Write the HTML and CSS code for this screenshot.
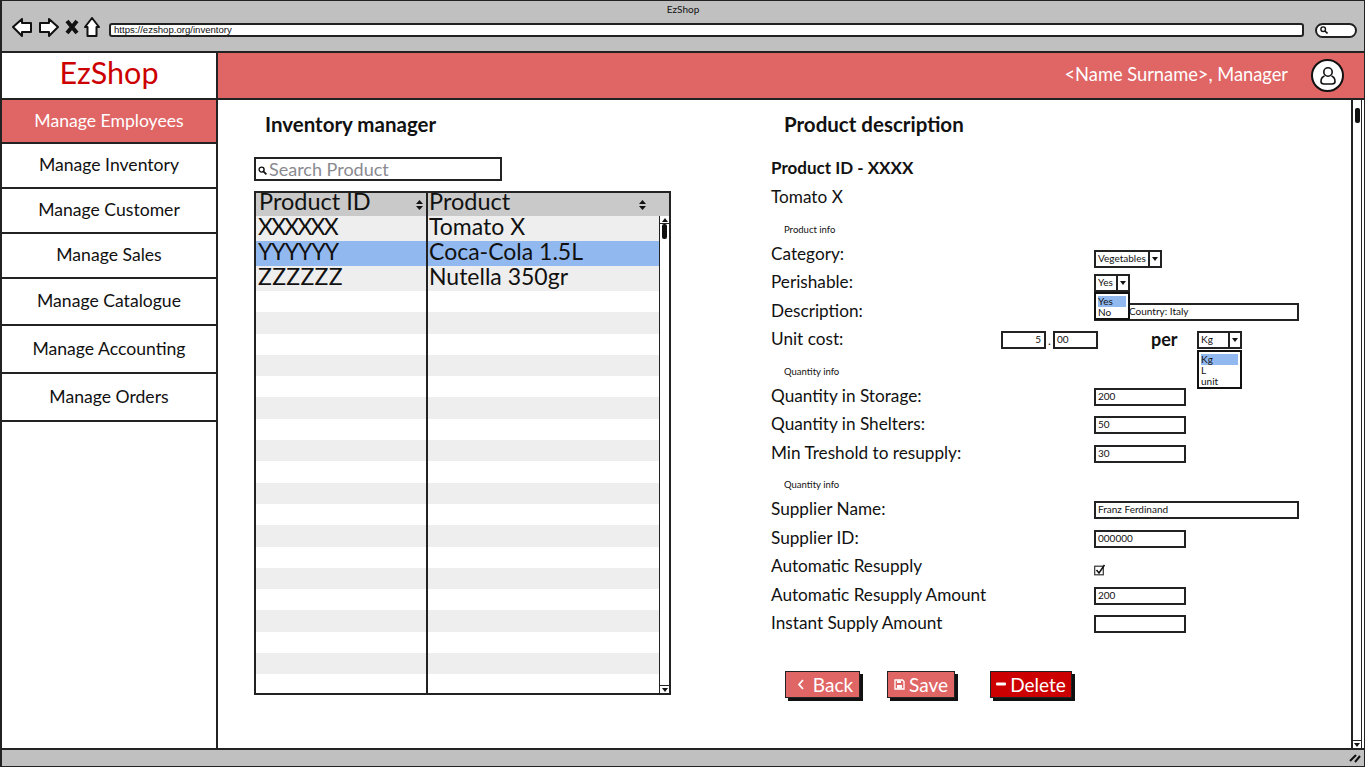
FILE: index.html
```html
<!DOCTYPE html>
<html lang="en">
<head>
<meta charset="utf-8">
<title>EzShop</title>
<link rel="stylesheet" href="styles.css">
</head>
<body>
<div class="frame">
  <header class="chrome">
    <div class="chrome-title">EzShop</div>
    <div class="chrome-nav">
      <svg class="nav-icons" width="92" height="22" viewBox="0 0 92 22">
        <path d="M2 10 L11 2 V6 H20 V15 H11 V19 Z" fill="#fff" stroke="#111" stroke-width="2" stroke-linejoin="round"/>
        <path d="M47 10 L38 2 V6 H29 V15 H38 V19 Z" fill="#fff" stroke="#111" stroke-width="2" stroke-linejoin="round"/>
        <path d="M56 4 L66 16 M66 4 L56 16" fill="none" stroke="#111" stroke-width="4"/>
        <path d="M81 1 L88 10 H85.500 V19 H76.500 V10 H74 Z" fill="#fff" stroke="#111" stroke-width="2" stroke-linejoin="round"/>
      </svg>
      <div class="url">https://ezshop.org/inventory</div>
      <div class="chrome-search">
        <svg width="8" height="8" viewBox="0 0 8 8"><circle cx="3.2" cy="3.2" r="2.3" fill="none" stroke="#111" stroke-width="1.4"/><path d="M5 5 L7.5 7.5" stroke="#111" stroke-width="1.6"/></svg>
      </div>
    </div>
  </header>

  <div class="topbar">
    <div class="logo">EzShop</div>
    <div class="banner">
      <span class="user-name">&lt;Name Surname&gt;, Manager</span>
      <span class="avatar">
        <svg width="18" height="20" viewBox="0 0 18 20"><circle cx="9" cy="6" r="4.2" fill="none" stroke="#111" stroke-width="1.6"/><path d="M5.5 10 C2.5 11 2 13 2 15.5 C2 17.5 3 18 5 18 H13 C15 18 16 17.5 16 15.5 C16 13 15.5 11 12.5 10" fill="none" stroke="#111" stroke-width="1.6"/></svg>
      </span>
    </div>
  </div>

  <div class="workspace">
    <nav class="sidebar">
      <a class="nav-item nav-active h44">Manage Employees</a>
      <a class="nav-item h45">Manage Inventory</a>
      <a class="nav-item h45">Manage Customer</a>
      <a class="nav-item h45">Manage Sales</a>
      <a class="nav-item h47">Manage Catalogue</a>
      <a class="nav-item h48">Manage Accounting</a>
      <a class="nav-item h48">Manage Orders</a>
    </nav>

    <main class="content">
      <section class="left">
        <h2 class="heading heading-left">Inventory manager</h2>
        <div class="search">
          <svg width="9" height="9" viewBox="0 0 9 9"><circle cx="3.6" cy="3.6" r="2.5" fill="none" stroke="#111" stroke-width="1.4"/><path d="M5.6 5.6 L8.4 8.4" stroke="#111" stroke-width="1.7"/></svg>
          <span>Search Product</span>
        </div>
        <div class="table">
          <div class="thead">
            <div class="th th-id">Product ID
              <svg class="sort" width="7" height="10" viewBox="0 0 7 10"><path d="M3.5 0 L7 4 H0 Z M3.5 10 L0 6 H7 Z" fill="#111"/></svg>
            </div>
            <div class="th th-name">Product
              <svg class="sort" width="7" height="10" viewBox="0 0 7 10"><path d="M3.5 0 L7 4 H0 Z M3.5 10 L0 6 H7 Z" fill="#111"/></svg>
            </div>
          </div>
          <div class="tbody">
            <div class="rows">
              <div class="row row-data row-grey"><div class="cell cell-id id-x">XXXXXX</div><div class="cell">Tomato X</div></div>
              <div class="row row-data row-sel"><div class="cell cell-id id-y">YYYYYY</div><div class="cell">Coca-Cola 1.5L</div></div>
              <div class="row row-data row-grey"><div class="cell cell-id id-z">ZZZZZZ</div><div class="cell">Nutella 350gr</div></div>
              <div class="row"><div class="cell cell-id"></div><div class="cell"></div></div>
              <div class="row row-grey"><div class="cell cell-id"></div><div class="cell"></div></div>
              <div class="row"><div class="cell cell-id"></div><div class="cell"></div></div>
              <div class="row row-grey"><div class="cell cell-id"></div><div class="cell"></div></div>
              <div class="row"><div class="cell cell-id"></div><div class="cell"></div></div>
              <div class="row row-grey"><div class="cell cell-id"></div><div class="cell"></div></div>
              <div class="row"><div class="cell cell-id"></div><div class="cell"></div></div>
              <div class="row row-grey"><div class="cell cell-id"></div><div class="cell"></div></div>
              <div class="row"><div class="cell cell-id"></div><div class="cell"></div></div>
              <div class="row row-grey"><div class="cell cell-id"></div><div class="cell"></div></div>
              <div class="row"><div class="cell cell-id"></div><div class="cell"></div></div>
              <div class="row row-grey"><div class="cell cell-id"></div><div class="cell"></div></div>
              <div class="row"><div class="cell cell-id"></div><div class="cell"></div></div>
              <div class="row row-grey"><div class="cell cell-id"></div><div class="cell"></div></div>
              <div class="row"><div class="cell cell-id"></div><div class="cell"></div></div>
              <div class="row row-grey"><div class="cell cell-id"></div><div class="cell"></div></div>
              <div class="row"><div class="cell cell-id"></div><div class="cell"></div></div>
              <div class="row row-grey"><div class="cell cell-id"></div><div class="cell"></div></div>
              <div class="row"><div class="cell cell-id"></div><div class="cell"></div></div>
            </div>
            <div class="vscroll vscroll-table">
              <div class="sb-btn"><svg width="6" height="4" viewBox="0 0 6 4"><path d="M3 0 L6 4 H0 Z" fill="#111"/></svg></div>
              <div class="sb-track"><div class="sb-thumb"></div></div>
              <div class="sb-btn"><svg width="6" height="4" viewBox="0 0 6 4"><path d="M0 0 H6 L3 4 Z" fill="#111"/></svg></div>
            </div>
          </div>
        </div>
      </section>

      <section class="right">
        <h2 class="heading heading-right">Product description</h2>
        <div class="form">
          <div class="frow frow-bold">Product ID - XXXX</div>
          <div class="frow">Tomato X</div>
          <div class="frow frow-sub">Product info</div>
          <div class="frow"><span class="lab">Category:</span>
            <span class="select sel-veg"><span class="sel-val">Vegetables</span><span class="sel-arrow"><i class="caret"></i></span></span></div>
          <div class="frow"><span class="lab">Perishable:</span>
            <span class="select sel-yes"><span class="sel-val">Yes</span><span class="sel-arrow"><i class="caret"></i></span>
              <span class="popup popup-yes"><span class="opt opt-on">Yes</span><span class="opt">No</span></span>
            </span></div>
          <div class="frow"><span class="lab">Description:</span><span class="input input-long input-desc">Country: Italy</span></div>
          <div class="frow"><span class="lab lab-cost">Unit cost:</span>
            <span class="input input-cost input-right">5</span><span class="dot">.</span><span class="input input-cost">00</span>
            <span class="per">per</span>
            <span class="select sel-kg"><span class="sel-val">Kg</span><span class="sel-arrow"><i class="caret"></i></span>
              <span class="popup popup-kg"><span class="opt opt-on">Kg</span><span class="opt">L</span><span class="opt">unit</span></span>
            </span></div>
          <div class="frow frow-sub">Quantity info</div>
          <div class="frow"><span class="lab">Quantity in Storage:</span><span class="input input-mid">200</span></div>
          <div class="frow"><span class="lab">Quantity in Shelters:</span><span class="input input-mid">50</span></div>
          <div class="frow"><span class="lab">Min Treshold to resupply:</span><span class="input input-mid">30</span></div>
          <div class="frow frow-sub">Quantity info</div>
          <div class="frow"><span class="lab">Supplier Name:</span><span class="input input-long">Franz Ferdinand</span></div>
          <div class="frow"><span class="lab">Supplier ID:</span><span class="input input-mid">000000</span></div>
          <div class="frow"><span class="lab">Automatic Resupply</span>
            <svg class="check" width="12" height="12" viewBox="0 0 12 12"><rect x="0.7" y="2.2" width="8.6" height="8.6" fill="#fff" stroke="#333" stroke-width="1.2"/><path d="M2.5 6 L5 9 L10.5 1" fill="none" stroke="#111" stroke-width="1.5"/></svg></div>
          <div class="frow"><span class="lab">Automatic Resupply Amount</span><span class="input input-mid">200</span></div>
          <div class="frow"><span class="lab">Instant Supply Amount</span><span class="input input-mid"></span></div>
        </div>
        <div class="actions">
          <button class="btn btn-back"><svg width="8" height="11" viewBox="0 0 8 11"><path d="M6 1 L2 5.5 L6 10" fill="none" stroke="#fff" stroke-width="1.8"/></svg>Back</button>
          <button class="btn btn-save"><svg width="11" height="11" viewBox="0 0 11 11"><path d="M1 1 H8.5 L10 2.5 V10 H1 Z" fill="none" stroke="#fff" stroke-width="1.3"/><rect x="3" y="1.5" width="4" height="2.5" fill="#fff"/><rect x="3" y="6" width="5" height="3.5" fill="#fff"/></svg>Save</button>
          <button class="btn btn-delete"><svg width="10" height="4" viewBox="0 0 10 4"><rect y="0.5" width="10" height="3" rx="1" fill="#fff"/></svg>Delete</button>
        </div>
      </section>
    </main>

    <div class="vscroll vscroll-page">
      <div class="sb-btn sb-btn-page"></div>
      <div class="sb-track"><div class="sb-thumb sb-thumb-page"></div></div>
      <div class="sb-btn"><svg width="6" height="4" viewBox="0 0 6 4"><path d="M0 0 H6 L3 4 Z" fill="#111"/></svg></div>
    </div>
  </div>

  <footer class="status">
    <svg width="12" height="10" viewBox="0 0 12 10"><path d="M1 8 L7 2 M6 9 L11 3" fill="none" stroke="#111" stroke-width="2"/></svg>
  </footer>
</div>
</body>
</html>
```
FILE: styles.css
```css
* { box-sizing: border-box; }
html, body { margin: 0; padding: 0; }
body { width: 1366px; height: 768px; overflow: hidden; background: #fff; font-family: "Lato", "Noto Sans", sans-serif; color: #111; }
.frame { width: 1365px; height: 767px; border: 2px solid #222; display: flex; flex-direction: column; border-top-width: 1px; border-right-width: 1px; border-bottom-width: 1px; }

.chrome { height: 52px; flex: none; background: #c0c0c0; border-bottom: 2px solid #222; display: flex; flex-direction: column; }
.chrome-title { font-size: 10px; line-height: 12px; text-align: center; padding-top: 2px; height: 16px; }
.chrome-nav { display: flex; align-items: center; padding: 0 7px 0 9px; height: 22px; }
.nav-icons { flex: none; margin-right: 6px; }
.url { flex: 1; height: 14px; background: #fff; border: 2px solid #222; border-radius: 3px; font-size: 9.6px; line-height: 9px; padding-left: 3px; font-family: "Liberation Sans", sans-serif; margin-top: 4px; }
.chrome-search { width: 42px; height: 15px; margin-left: 11px; margin-top: 4px; background: #fff; border: 2px solid #222; border-radius: 8px; display: flex; align-items: center; padding-left: 3px; }
.chrome-search svg { display: block; }

.topbar { height: 47px; flex: none; display: flex; border-bottom: 2px solid #222; }
.logo { width: 216px; flex: none; border-right: 2px solid #222; background: #fff; color: #cc0000; font-size: 30.5px; text-align: center; line-height: 39px; }
.banner { flex: 1; background: #e06565; display: flex; align-items: center; justify-content: flex-end; padding-right: 20px; color: #fff; }
.user-name { font-size: 18.3px; margin-right: 23px; padding-bottom: 3px; }
.avatar { width: 33px; height: 33px; border: 2px solid #111; border-radius: 50%; background: #fff; display: flex; align-items: center; justify-content: center; }

.workspace { flex: 1; min-height: 0; display: flex; }
.sidebar { width: 216px; flex: none; border-right: 2px solid #222; display: flex; flex-direction: column; }
.nav-item { display: flex; align-items: center; justify-content: center; font-size: 17.6px; border-bottom: 2px solid #222; color: #111; padding-bottom: 2px; }
.h44 { height: 44px; } .h45 { height: 45px; } .h47 { height: 47px; } .h48 { height: 48px; }
.nav-active { background: #e06565; color: #fff; }

.content { flex: 1; min-width: 0; display: flex; }
.heading { margin: 0; font-size: 20.5px; line-height: 24px; font-weight: 700; padding-top: 12px; height: 36px; }
.left { width: 553px; flex: none; padding-left: 36px; }
.heading-left { margin-left: 11px; }
.search { width: 248px; height: 24px; margin-top: 21px; border: 2px solid #222; display: flex; align-items: center; padding-left: 2px; gap: 2px; font-size: 18px; color: #8a8a90; }
.search svg { margin-top: 3px; }
.table { width: 417px; height: 504px; margin-top: 10px; border: 2px solid #222; display: flex; flex-direction: column; }
.thead { display: flex; height: 23px; flex: none; background: #c9c9c9; font-size: 23.5px; line-height: 17px; }
.th { position: relative; padding-left: 3px; white-space: nowrap; }
.th-id { width: 172px; flex: none; border-right: 2px solid #222; }
.th-name { flex: 1; padding-left: 1px; }
.sort { position: absolute; top: 7px; right: 3px; }
.th-name .sort { right: 23px; }
.tbody { flex: 1; min-height: 0; display: flex; }
.rows { flex: 1; min-width: 0; }
.row { display: flex; height: 21.3px; }
.row:last-child { height: 18.6px; }
.row-data { height: 25px; font-size: 23px; line-height: 20px; }
.row-grey { background: #eeeeee; }
.row-sel { background: #91b9f0; }
.cell { flex: 1; padding-left: 1px; white-space: nowrap; }
.cell-id { width: 172px; flex: none; border-right: 2px solid #222; padding-left: 2px; }
.id-x { letter-spacing: -1.8px; }
.id-y { letter-spacing: -1px; }
.id-z { letter-spacing: 0.3px; }

.vscroll { flex: none; display: flex; flex-direction: column; background: #fff; }
.vscroll-table { width: 10px; border-left: 1px solid #222; }
.vscroll-page { width: 11px; margin-right: 2px; border-left: 2px solid #222; border-right: 1px solid #222; }
.sb-btn { height: 8px; flex: none; border-bottom: 1px solid #222; display: flex; align-items: center; justify-content: center; }
.sb-btn:last-child { border-top: 1px solid #222; border-bottom: 0; }
.sb-btn-page { border-bottom: 0; }
.sb-track { flex: 1; min-height: 0; display: flex; justify-content: center; align-items: flex-start; }
.sb-thumb { width: 5px; height: 15px; background: #111; border-radius: 2px; }

.right { flex: 1; padding-left: 0; }
.heading-right { margin-left: 13px; }
.form { margin-top: 18px; font-size: 17.2px; }
.frow { height: 28.4px; display: flex; align-items: center; }
.frow-bold { font-weight: 700; font-size: 17px; padding-bottom: 1px; }
.frow-sub { font-size: 9.5px; padding: 9px 0 0 13px; }
.lab { width: 323px; flex: none; white-space: nowrap; }
.lab-cost { width: 230px; }
.input { height: 18px; margin-top: 3px; border: 2px solid #222; background: #fff; font-size: 10px; line-height: 13px; padding-left: 2px; display: block; white-space: nowrap; }
.input-long { width: 205px; }
.input-mid { width: 92px; }
.input-desc { padding-left: 33px; }
.input-cost { width: 45px; }
.input-right { text-align: right; padding-right: 3px; }
.dot { width: 7px; text-align: center; font-size: 12px; margin-top: 3px; }
.per { font-size: 18px; font-weight: 700; margin-left: 53px; width: 46px; }
.select { position: relative; display: flex; height: 18px; margin-top: 2px; border: 2px solid #222; background: #fff; font-size: 10px; line-height: 13px; }
.sel-val { flex: 1; padding-left: 2px; white-space: nowrap; }
.sel-arrow { width: 12px; flex: none; border-left: 2px solid #222; display: flex; align-items: center; justify-content: center; }
.caret { display: block; width: 0; height: 0; border-left: 3.5px solid transparent; border-right: 3.5px solid transparent; border-top: 4px solid #111; }
.sel-veg { width: 68px; margin-top: 12px; }
.sel-yes { width: 36px; }
.sel-kg { width: 45px; }
.popup { position: absolute; left: -2px; background: #fff; border: 2px solid #111; display: flex; flex-direction: column; padding: 2px; z-index: 2; }
.popup-yes { top: 16px; width: 36px; height: 28px; }
.popup-kg { top: 17px; width: 45px; height: 39px; }
.opt { height: 11.5px; line-height: 11px; padding-left: 0; }
.opt-on { background: #91b9f0; }
.check { display: block; margin-top: 8px; }

.actions { display: flex; margin: 34px 0 0 14px; }
.btn { height: 27px; border: 1px solid #222; box-shadow: 3px 3px 0 #111; color: #fff; background: #e06565; font-family: inherit; font-size: 19px; padding: 0; display: flex; align-items: center; justify-content: center; gap: 8px; }
.btn-back { width: 75px; margin-right: 27px; padding-left: 5px; }
.btn-save { width: 68px; margin-right: 35px; gap: 4px; }
.btn-delete { width: 82px; background: #cc0000; gap: 4px; }

.status { height: 18px; flex: none; background: #c0c0c0; border-top: 2px solid #222; display: flex; align-items: center; justify-content: flex-end; padding-right: 3px; }
```
